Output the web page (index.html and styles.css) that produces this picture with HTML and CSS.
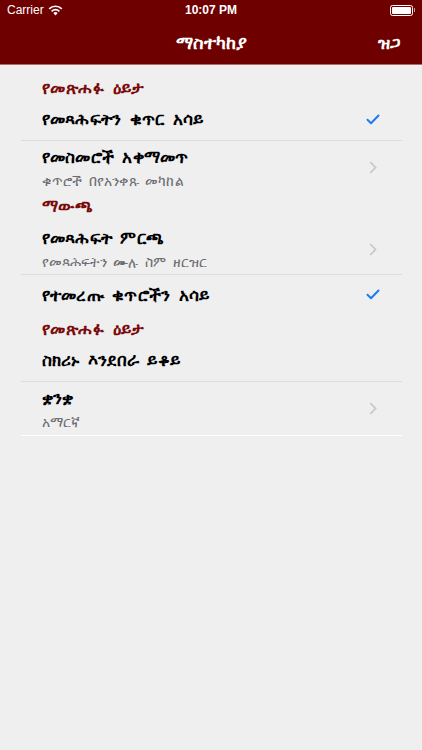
FILE: index.html
```html
<!DOCTYPE html>
<html lang="am">
<head>
<meta charset="utf-8">
<title>ማስተካከያ</title>
<link rel="stylesheet" href="styles.css">
</head>
<body>
<header class="topbar">
  <div class="status">
    <div class="status-left">
      <span class="carrier">Carrier</span>
      <svg class="wifi" width="15" height="11" viewBox="0 0 15 11"><path d="M7.5 10.5 L5.3 8.1 A3.2 3.2 0 0 1 9.7 8.1 Z" fill="#fff"/><path d="M3.6 6.3 A5.6 5.6 0 0 1 11.4 6.3" stroke="#fff" stroke-width="1.7" fill="none"/><path d="M1.2 3.8 A9 9 0 0 1 13.8 3.8" stroke="#fff" stroke-width="1.7" fill="none"/></svg>
    </div>
    <div class="time">10:07 PM</div>
    <div class="status-right">
      <div class="battery"><div class="battery-fill"></div></div><div class="battery-tip"></div>
    </div>
  </div>
  <nav class="navbar">
    <div class="nav-side"></div>
    <div class="nav-title">ማስተካከያ</div>
    <div class="nav-side nav-right">ዝጋ</div>
  </nav>
</header>
<main class="table">
  <div class="section-head first">የመጽሐፉ ዕይታ</div>
  <div class="row single">
    <div class="row-text"><div class="title">የመጻሕፍትን ቁጥር አሳይ</div></div>
    <svg class="check" width="14" height="11" viewBox="0 0 14 11"><path d="M1.5 5.8 L5 9.2 L12.5 1.5" stroke="#1a7cf0" stroke-width="2" fill="none" stroke-linecap="round" stroke-linejoin="round"/></svg>
  </div>
  <div class="row double sep">
    <div class="row-text"><div class="title">የመስመሮች አቀማመጥ</div><div class="subtitle">ቁጥሮች በየአንቀጹ መካከል</div></div>
    <svg class="chev" width="8" height="13" viewBox="0 0 8 13"><path d="M1.2 1 L6.5 6.5 L1.2 12" stroke="#c7c7cc" stroke-width="1.8" fill="none"/></svg>
  </div>
  <div class="section-head second">ማውጫ</div>
  <div class="row double lower">
    <div class="row-text"><div class="title">የመጻሕፍት ምርጫ</div><div class="subtitle">የመጻሕፍትን ሙሉ ስም ዘርዝር</div></div>
    <svg class="chev" width="8" height="13" viewBox="0 0 8 13"><path d="M1.2 1 L6.5 6.5 L1.2 12" stroke="#c7c7cc" stroke-width="1.8" fill="none"/></svg>
  </div>
  <div class="row single sep four">
    <div class="row-text"><div class="title">የተመረጡ ቁጥሮችን አሳይ</div></div>
    <svg class="check" width="14" height="11" viewBox="0 0 14 11"><path d="M1.5 5.8 L5 9.2 L12.5 1.5" stroke="#1a7cf0" stroke-width="2" fill="none" stroke-linecap="round" stroke-linejoin="round"/></svg>
  </div>
  <div class="section-head third">የመጽሐፉ ዕይታ</div>
  <div class="row single">
    <div class="row-text"><div class="title">ስክሪኑ እንደበራ ይቆይ</div></div>
  </div>
  <div class="row double sep">
    <div class="row-text"><div class="title">ቋንቋ</div><div class="subtitle">አማርኛ</div></div>
    <svg class="chev" width="8" height="13" viewBox="0 0 8 13"><path d="M1.2 1 L6.5 6.5 L1.2 12" stroke="#c7c7cc" stroke-width="1.8" fill="none"/></svg>
  </div>
  <div class="end-line"></div>
</main>
</body>
</html>
```
FILE: styles.css
```css
html, body {
  margin: 0;
  padding: 0;
}
body {
  width: 422px;
  height: 750px;
  background: #efeff0;
  font-family: "Noto Sans", "DejaVu Sans", sans-serif;
  color: #000;
  overflow: hidden;
}
.topbar {
  background: #6e0000;
  border-bottom: 1px solid #b06a6a;
}
.status {
  height: 20px;
  display: flex;
  align-items: center;
  justify-content: space-between;
  padding: 0 7px;
  color: #fff;
  font-family: "Liberation Sans", Arial, sans-serif;
  font-size: 12px;
}
.status-left {
  display: flex;
  align-items: center;
  gap: 4px;
  width: 100px;
}
.time {
  font-weight: 600;
  font-size: 12px;
}
.status-right {
  width: 100px;
  display: flex;
  justify-content: flex-end;
  align-items: center;
}
.battery {
  border: 1px solid #fff;
  border-radius: 2.5px;
  padding: 1px;
  box-sizing: border-box;
  width: 23px;
  height: 11px;
}
.battery-fill {
  width: 100%;
  height: 100%;
  background: #fff;
  border-radius: 1px;
}
.battery-tip {
  width: 1.5px;
  height: 4px;
  background: #fff;
  opacity: 0.6;
  margin-left: 1px;
}
.navbar {
  height: 44px;
  display: flex;
  align-items: center;
  justify-content: space-between;
  color: #fff;
  padding: 0 22px 0 22px;
}
.nav-side {
  width: 60px;
  font-size: 17px;
  font-weight: bold;
}
.nav-right {
  text-align: right;
}
.nav-title {
  font-size: 17.5px;
  font-weight: bold;
}
.table {
  margin: 0 20px 0 21px;
}
.section-head {
  color: #7a0b0b;
  font-size: 16.5px;
  font-weight: bold;
  word-spacing: 4px;
  letter-spacing: 0.4px;
  line-height: 20px;
  padding-left: 21px;
  display: flex;
  align-items: flex-end;
  box-sizing: border-box;
}
.section-head.first { height: 33px; padding-bottom: 0; }
.section-head.second { height: 26px; padding-bottom: 4px; }
.section-head.third { height: 25px; padding-bottom: 0; }
.row {
  display: flex;
  align-items: center;
  justify-content: space-between;
  padding: 0 22px 0 21px;
  box-sizing: border-box;
}
.row.single { height: 42px; }
.row.single.four { height: 40px; }
.row.double { height: 54px; }
.row.double.lower { padding-top: 4px; }
.row.sep { border-top: 1px solid #dcdce0; }
.title {
  font-size: 17px;
  font-weight: bold;
  line-height: 20px;
  word-spacing: 4px;
  letter-spacing: 0.15px;
}
.subtitle {
  font-size: 13.5px;
  color: #6d6d72;
  line-height: 16px;
  margin-top: 6px;
  word-spacing: 3px;
  letter-spacing: 0.1px;
}
.chev { margin-right: 3px; }
.end-line {
  height: 1px;
  background: #ffffff;
}
```
